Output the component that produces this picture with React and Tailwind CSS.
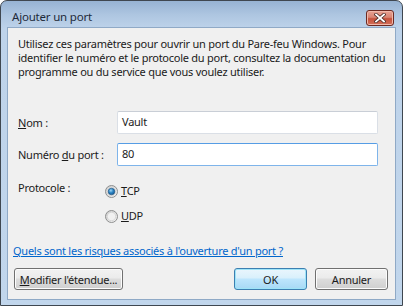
import React from 'react';

const font = { fontFamily: '"Noto Sans", "Open Sans", sans-serif' };

const Radio = ({ checked }) => (
    <svg width="13" height="13" viewBox="0 0 13 13" className="shrink-0">
        <defs>
            <linearGradient id={checked ? 'rg1' : 'rg2'} x1="0" y1="0" x2="1" y2="1">
                <stop offset="0" stopColor="#c9c9c9" />
                <stop offset="1" stopColor="#f7f7f7" />
            </linearGradient>
            <radialGradient id="dot" cx="0.4" cy="0.35" r="0.7">
                <stop offset="0" stopColor="#9fd7f5" />
                <stop offset="0.5" stopColor="#2b83c3" />
                <stop offset="1" stopColor="#175a92" />
            </radialGradient>
        </defs>
        <circle cx="6.5" cy="6.5" r="6" fill={`url(#${checked ? 'rg1' : 'rg2'})`} stroke="#8e8f8f" strokeWidth="1" />
        <circle cx="6.5" cy="6.5" r="4.2" fill="#f1f1f1" stroke="#d2d2d2" strokeWidth="0.8" />
        {checked && <circle cx="6.5" cy="6.5" r="3.3" fill="url(#dot)" stroke="#1d4f7b" strokeWidth="0.6" />}
    </svg>
);

const Button = ({ children, def, className = '' }) => (
    <button
        className={`h-[22px] rounded-[3px] border text-[11px] tracking-[-0.25px] text-[#1b1b1b] leading-none whitespace-nowrap flex items-center justify-center ${def ? 'border-[#3c7fb1] shadow-[inset_0_0_0_1px_#9ee4f8] bg-[linear-gradient(#eaf6fd_0%,#d9f0fc_45%,#bee6fd_50%,#a7d9f5_100%)]' : 'border-[#707070] shadow-[inset_0_0_0_1px_#fcfcfc] bg-[linear-gradient(#f2f2f2_0%,#ebebeb_45%,#dddddd_50%,#cfcfcf_100%)]'} ${className}`}
        style={font}
    >
        {children}
    </button>
);

export default function App() {
    return (
        <div className="w-[403px] h-[306px] bg-white">
            <div className="w-[403px] h-[306px] flex flex-col rounded-t-[7px] border border-[#3f4750] bg-[linear-gradient(#97b3d3_0px,#aec6e1_14px,#bed3ea_28px,#c1d6ec_100%)] overflow-hidden">
                {/* title bar */}
                <div className="h-[26px] flex items-start pl-[11px] pr-[8px] shrink-0">
                    <span className="mt-[9px] text-[11.5px] tracking-[-0.2px] leading-[14px] text-[#1e2a3a]" style={font}>Ajouter un port</span>
                    <div className="ml-auto mt-[9px] w-[28px] h-[16px] rounded-[3px] border border-[#6d2a22] bg-[linear-gradient(#e8a293_0%,#d98473_45%,#c5513c_55%,#d3705a_100%)] flex items-center justify-center shadow-[inset_0_0_0_1px_#f0b8aa]">
                        <svg width="12" height="10" viewBox="0 0 12 10">
                            <path d="M2 1.5 L10 8.5 M10 1.5 L2 8.5" stroke="#4a2a26" strokeWidth="3.4" strokeLinecap="square" />
                            <path d="M2 1.5 L10 8.5 M10 1.5 L2 8.5" stroke="#ffffff" strokeWidth="1.8" strokeLinecap="square" />
                        </svg>
                    </div>
                </div>

                {/* client area */}
                <div className="flex-1 mx-[6px] mb-[5px] border border-[#8fa9c6] bg-[#f0f0f0] text-[11px] tracking-[-0.25px] text-[#1b1b1b] whitespace-nowrap flex flex-col" style={font}>
                    <p className="pl-[10px] pt-[9px] leading-[14px]">
                        Utilisez ces paramètres pour ouvrir un port du Pare-feu Windows. Pour<br />
                        identifier le numéro et le protocole du port, consultez la documentation du<br />
                        programme ou du service que vous voulez utiliser.
                    </p>

                    <div className="pl-[10px] mt-[32px] flex items-center">
                        <span className="w-[99px] leading-[14px]"><u>N</u>om :</span>
                        <div className="w-[261px] h-[23px] rounded-[2px] border border-[#dadfe6] border-t-[#c9ced6] bg-white flex items-center pl-[4px]">Vault</div>
                    </div>

                    <div className="pl-[10px] mt-[9px] flex items-center">
                        <span className="w-[99px] leading-[14px]">Numéro <u>d</u>u port :</span>
                        <div className="w-[261px] h-[23px] rounded-[2px] border border-[#7eb4ea] border-t-[#569de5] bg-white flex items-center pl-[4px]">80</div>
                    </div>

                    <div className="pl-[10px] mt-[15px] flex items-start">
                        <span className="w-[87px] leading-[14px]">Protocole :</span>
                        <div className="flex flex-col gap-[11px] pt-[3px]">
                            <label className="flex items-center gap-[3px] leading-[14px]">
                                <Radio checked />
                                <span><u>T</u>CP</span>
                            </label>
                            <label className="flex items-center gap-[3px] leading-[14px]">
                                <Radio />
                                <span><u>U</u>DP</span>
                            </label>
                        </div>
                    </div>

                    <a className="ml-[5px] mt-[21px] leading-[14px] text-[#0066cc] underline self-start">
                        Quels sont les risques associés à l'ouverture d'un port ?
                    </a>

                    <div className="mt-[10px] pl-[6px] flex">
                        <Button className="w-[109px]"><u>M</u>odifier l'étendue...</Button>
                        <Button def className="ml-auto w-[73px]">OK</Button>
                        <Button className="ml-[8px] mr-[7px] w-[73px]">Annuler</Button>
                    </div>
                </div>
            </div>
        </div>
    );
}
